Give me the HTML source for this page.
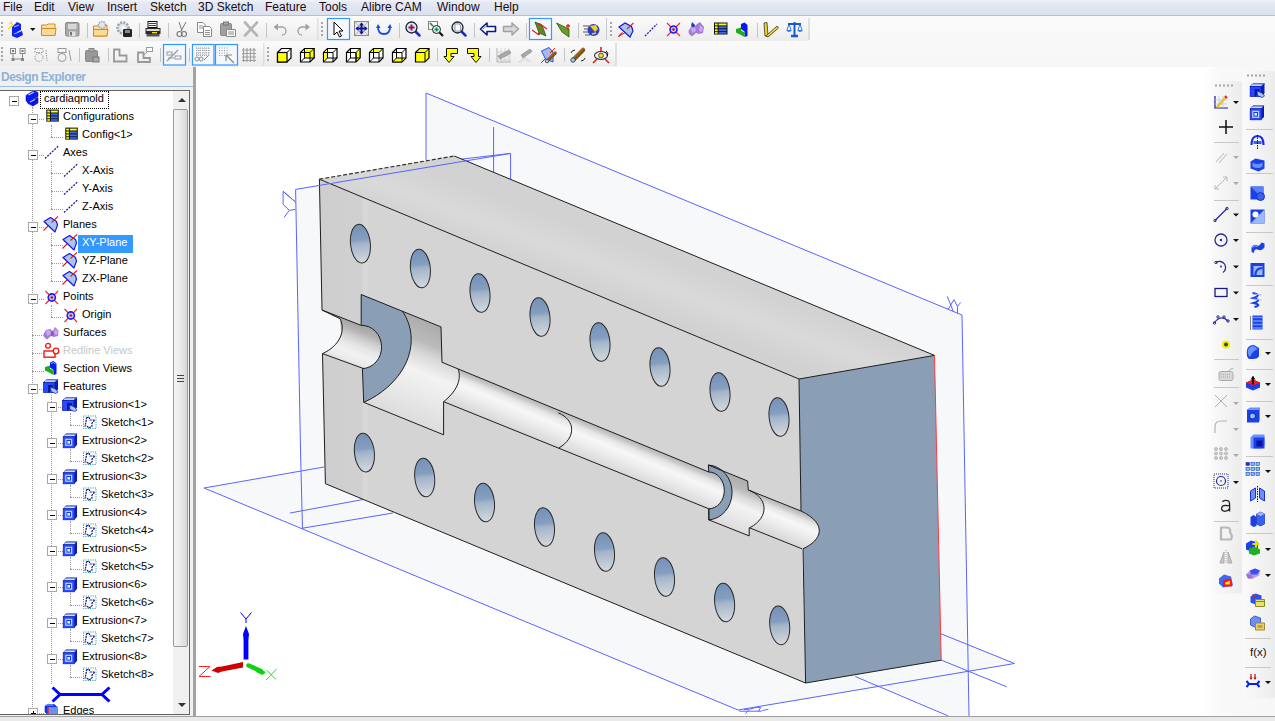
<!DOCTYPE html>
<html><head><meta charset="utf-8">
<style>
*{box-sizing:border-box}
html,body{margin:0;padding:0}
body{width:1275px;height:721px;overflow:hidden;position:relative;background:#fff;font-family:"Liberation Sans",sans-serif;color:#000}
.abs{position:absolute}
#menubar{left:0;top:0;width:1275px;height:16px;background:linear-gradient(#f1f3f9 0,#e4e8f4 3px,#dde2f0 14px);border-bottom:1px solid #b7bfd0}
.mi{position:absolute;top:0px;font-size:12px;line-height:14px;white-space:nowrap;color:#1a0a10}
#tbband{left:0;top:16px;width:1275px;height:51px;background:linear-gradient(#fafafa,#f7f7f7)}
#panel{left:0;top:67px;width:193px;height:649px;background:#f0f0f0}
#splitter{left:193px;top:67px;width:3px;height:649px;background:#a3a3a3}
#hdrtxt{left:1px;top:70px;font-size:12px;font-weight:bold;color:#8fb1d8;letter-spacing:-0.5px}
#hdrline{left:0;top:86px;width:193px;height:1px;background:#9dbbe0}
#tree{left:0;top:90px;width:190px;height:625px;background:#fff;border-top:1px solid #646464;border-right:1px solid #646464;border-bottom:1px solid #646464;overflow:hidden}
#tree .t{position:absolute;font-size:11px;line-height:13px;white-space:nowrap}
#tree .vl{position:absolute;width:1px;border-left:1px dotted #9a9a9a}
#tree .hl{position:absolute;height:1px;border-top:1px dotted #9a9a9a}
#tree .ex{position:absolute;width:10px;height:10px;border:1px solid #a8a8a8;background:#fff}
#tree .ex i{position:absolute;left:1.5px;top:3.5px;width:5px;height:1.5px;background:#000}
#tree .ex b{position:absolute;left:3.5px;top:1.5px;width:1.5px;height:5px;background:#000}
#tree .ic{position:absolute;overflow:visible}
#bottom{left:0;top:716px;width:1275px;height:5px;background:#eaeaea;border-top:1px solid #a0a0a0}
</style></head><body>
<svg width="0" height="0" style="position:absolute">
<defs>
<symbol id="i-part" viewBox="0 0 20 20"><path d="M5 6.5 L10 3.5 L14 5.5 L14 9.5 L9 12 L9 12.5 L14 10.5 L14 16 L9 19 L4 16.5 L2 13.5 L2 8.5 Z" fill="#0a18f5" stroke="#0a10b0" stroke-width="0.6"/><path d="M4.5 8 L10 5 M6 15 L11 12.5" stroke="#b0c8ff" stroke-width="1.3"/><path d="M9 19 L9 15 L14 12.5" stroke="#0008a0" stroke-width="0.8" fill="none"/></symbol>
<symbol id="i-config" viewBox="0 0 20 20"><rect x="3.3" y="4.6" width="12.5" height="12" fill="#111"/><rect x="4.3" y="5.6" width="2.6" height="1.9" fill="#ffff00"/><rect x="7.9" y="5.6" width="6.9" height="1.9" fill="#ffff00"/><rect x="4.3" y="8.5" width="2.6" height="1.9" fill="#ffff00"/><rect x="7.9" y="8.5" width="6.9" height="1.9" fill="#3b6cf7"/><rect x="4.3" y="11.4" width="2.6" height="1.9" fill="#ffff00"/><rect x="7.9" y="11.4" width="6.9" height="1.9" fill="#3b6cf7"/><rect x="4.3" y="14.2" width="2.6" height="1.6" fill="#ffff00"/><rect x="7.9" y="14.2" width="6.9" height="1.6" fill="#3b6cf7"/></symbol>
<symbol id="i-axis" viewBox="0 0 20 20"><path d="M2 17.5 L15.5 5" stroke="#1a1aa0" stroke-width="1.3" stroke-dasharray="2 1.2"/></symbol>
<symbol id="i-plane" viewBox="0 0 20 20"><path d="M0.5 17.5 L5 13" stroke="#d02020" stroke-width="1.1"/><path d="M1 8.5 L7.5 4.5 L13.5 8.5 L14.5 12 L12 19 Z" fill="#a9c5ec" stroke="#1212e0" stroke-width="1.1" stroke-linejoin="round"/><path d="M8.5 9.5 L15 3.5" stroke="#e02020" stroke-width="1.1"/></symbol>
<symbol id="i-point" viewBox="0 0 20 20"><path d="M2.5 6 L15 19 M15 6 L2.5 19" stroke="#ff2020" stroke-width="1.1"/><circle cx="8.8" cy="12.5" r="3.6" fill="#c8c8d0" stroke="#1a1aff" stroke-width="1.6"/><circle cx="8.8" cy="12.5" r="1.3" fill="#c01020"/></symbol>
<symbol id="i-surf" viewBox="0 0 20 20"><path d="M0.5 13 L3 9 L7 8 L10 10 L12 6 L15.5 9.5 L15 15 L11 16 L8 15 L4 18.5 L1 16 Z" fill="#a77ad6"/><path d="M3 10 L7 9 L8 13 L4 15 Z M12 8 L15 10 L14 14 L11 13 Z" fill="#c9a8ef"/><path d="M8 11 L10 10.5 L11 14 L8 15 Z" fill="#8a50c0"/></symbol>
<symbol id="i-redline" viewBox="0 0 20 20"><circle cx="5" cy="6.8" r="2.4" fill="none" stroke="#ff1010" stroke-width="1.3"/><rect x="1" y="12" width="11" height="6.2" fill="none" stroke="#ff1010" stroke-width="1.4"/><circle cx="13" cy="12" r="2.8" fill="#fff" stroke="#ff1010" stroke-width="1.3"/></symbol>
<symbol id="i-section" viewBox="0 0 20 20"><path d="M7 5.5 L10.5 4 L13.5 6.5 L13.5 17 L10.5 18 L10.5 13 L7 10.5 Z" fill="#0a18f5"/><path d="M8 6.5 L10.5 5.5 L12.5 7" stroke="#8ab0ff" stroke-width="1" fill="none"/><path d="M2 10 L7 8.5 L7 11.5 L10.5 13.5 L10.5 18 L6 15.5 L2 13.5 Z" fill="#18b018"/></symbol>
<symbol id="i-feat" viewBox="0 0 20 20"><path d="M0.5 7.5 L3.5 4.7 H15 L11.5 7.5 Z" fill="#8aa8ff" stroke="#0a18b0" stroke-width="0.7"/><path d="M11.5 7.5 L15 4.7 V14.5 L11.5 17.5 Z" fill="#0a1ab8"/><rect x="0.5" y="7.5" width="11" height="10" fill="#2648ff" stroke="#0a18b0" stroke-width="0.7"/><path d="M2 6.2 H12" stroke="#e0ecff" stroke-width="1"/><path d="M5 10 H10 V12.5 L7.5 12.5 L7 17.5 H5 Z" fill="#0a18a0"/><path d="M7.5 12 L12.5 14 L15 17 L12.5 18.5 L8 16.5 Z" fill="#a8c8ff" stroke="#0a18b0" stroke-width="0.7"/></symbol>
<symbol id="i-extr" viewBox="0 0 20 20"><path d="M1.2 7.8 L4 4.8 H15 L12.2 7.8 Z" fill="#8aa8ff" stroke="#0a18b0" stroke-width="0.7"/><path d="M12.2 7.8 L15 4.8 V16 L12.2 18.8 Z" fill="#0a1ab8"/><rect x="1.2" y="7.8" width="11" height="11" fill="#2a50ff" stroke="#0a18b0" stroke-width="0.7"/><rect x="3.8" y="10.4" width="5.8" height="5.8" fill="#1030e0" stroke="#b8d0ff" stroke-width="1.3"/><rect x="5.4" y="12" width="2.6" height="2.6" fill="#e8f0ff"/><path d="M2.5 6.4 H12.5" stroke="#e0ecff" stroke-width="0.9"/></symbol>
<symbol id="i-sketch" viewBox="0 0 20 20"><rect x="2.5" y="5" width="12.5" height="12.5" fill="none" stroke="#2a8a90" stroke-width="1" stroke-dasharray="1 1.3"/><path d="M5.5 7 L8 6 L9 9 L14 9 L11 12 L11 15 L8 17 L6 15 L4 15 L5 11 Z" fill="none" stroke="#101890" stroke-width="1.2" stroke-dasharray="2 0.8"/></symbol>
<symbol id="i-edges" viewBox="0 0 20 20"><path d="M1.7 7 L4.5 5 L11 5 L14.6 8 L14.6 16 L4.5 16 L1.7 13 Z" fill="#1030e8"/><rect x="4.5" y="8" width="10" height="8" fill="#6a90f0"/><path d="M5 8 V16" stroke="#ff1010" stroke-width="1.3"/><path d="M2.5 6 H10.5" stroke="#a0c0ff" stroke-width="1"/></symbol>
</defs></svg>

<div id="menubar" class="abs"></div>
<div class="mi" style="left:3px">File</div>
<div class="mi" style="left:34px">Edit</div>
<div class="mi" style="left:68px">View</div>
<div class="mi" style="left:107px">Insert</div>
<div class="mi" style="left:150px">Sketch</div>
<div class="mi" style="left:198px">3D Sketch</div>
<div class="mi" style="left:265px">Feature</div>
<div class="mi" style="left:319px">Tools</div>
<div class="mi" style="left:361px">Alibre CAM</div>
<div class="mi" style="left:437px">Window</div>
<div class="mi" style="left:494px">Help</div>
<div id="tbband" class="abs"></div>
<svg class="abs" style="left:0;top:16px" width="1275" height="51" viewBox="0 16 1275 51">
<defs>
<linearGradient id="tbg" x1="0" y1="0" x2="0" y2="1"><stop offset="0" stop-color="#fbfbfb"/><stop offset="1" stop-color="#ececec"/></linearGradient>
<linearGradient id="fold" x1="0" y1="0" x2="0" y2="1"><stop offset="0" stop-color="#fde7b8"/><stop offset="1" stop-color="#f4c877"/></linearGradient>
<linearGradient id="cyl" x1="0" y1="0" x2="1" y2="1"><stop offset="0" stop-color="#f0c060"/><stop offset="0.5" stop-color="#8a5a10"/><stop offset="1" stop-color="#3a2a08"/></linearGradient>
</defs>
<rect x="0" y="17" width="318.5" height="24" fill="url(#tbg)" rx="2"/>
<rect x="317.5" y="18" width="1" height="22" fill="#c9c9c9"/>
<rect x="318.5" y="17" width="288.5" height="24" fill="url(#tbg)" rx="2"/>
<rect x="606" y="18" width="1" height="22" fill="#c9c9c9"/>
<rect x="607" y="17" width="202.5" height="24" fill="url(#tbg)" rx="2"/>
<rect x="808.5" y="18" width="1" height="22" fill="#c9c9c9"/>
<rect x="0" y="42" width="264.5" height="24.5" fill="url(#tbg)" rx="2"/>
<rect x="263.5" y="43" width="1" height="22.5" fill="#c9c9c9"/>
<rect x="264.5" y="42" width="352.0" height="24.5" fill="url(#tbg)" rx="2"/>
<rect x="615.5" y="43" width="1" height="22.5" fill="#c9c9c9"/>
<rect x="1" y="22" width="2" height="2" fill="#a6a6a6"/>
<rect x="1" y="26" width="2" height="2" fill="#a6a6a6"/>
<rect x="1" y="30" width="2" height="2" fill="#a6a6a6"/>
<rect x="1" y="34" width="2" height="2" fill="#a6a6a6"/>
<g transform="translate(8 21)"><path d="M9 1 L13 3 L13 9 L9 11 L9 12 L14 10 L15 14 L9 17 L4 15 L4 6 Z" fill="#1020f0"/><path d="M6 6 L11 4 M6 13 L11 11" stroke="#8ab0ff" stroke-width="1.2"/><path d="M1 2 L5 4 M3 0 L4 3 M0 8 L4 5" stroke="#ffe000" stroke-width="1.2"/></g>
<path d="M30 28 H35.5 L32.75 31 Z" fill="#111"/>
<g transform="translate(41 23)"><path d="M0.5 2 H6 L7 1 H14 V12 H0.5 Z" fill="url(#fold)" stroke="#d08a20" stroke-width="1"/><path d="M0.5 5.5 H15 L14 12.5 H0.5 Z" fill="#fbd996" stroke="#d08a20" stroke-width="1"/></g>
<g transform="translate(65 22)"><rect x="0.5" y="0.5" width="13.5" height="13.5" rx="1.5" fill="#a8a8a8" stroke="#8a8a8a"/><rect x="3" y="2" width="8.5" height="5" fill="#d8d8d8"/><rect x="4" y="9.5" width="6.5" height="4.5" fill="#e0e0e0"/><rect x="5" y="10" width="2" height="3.5" fill="#777"/></g>
<rect x="87" y="23" width="1" height="15" fill="#c4c4c4"/>
<g transform="translate(93 21)"><path d="M0.5 5 H6 L7 4 H14 V15 H0.5 Z" fill="url(#fold)" stroke="#d08a20"/><path d="M0.5 8.5 H15 L14 15 H0.5 Z" fill="#fbd996" stroke="#d08a20"/><circle cx="9" cy="4" r="3.5" fill="#dfe6ee" stroke="#9aa4b0" stroke-width="1.5" stroke-dasharray="1.5 1"/></g>
<g transform="translate(116 21)"><circle cx="7" cy="7" r="5.5" fill="#dde3ea" stroke="#9aa2ac" stroke-width="2.5" stroke-dasharray="2 1.2"/><circle cx="7" cy="7" r="2" fill="#fff"/><rect x="7" y="8" width="9" height="8" rx="1" fill="#222"/><rect x="9" y="9" width="5" height="3" fill="#888"/></g>
<rect x="139" y="23" width="1" height="15" fill="#c4c4c4"/>
<g transform="translate(145 21)"><rect x="3" y="0.5" width="9" height="6" fill="#fff" stroke="#111"/><path d="M4 2.5 H11 M4 4.5 H11" stroke="#111" stroke-width="0.8"/><path d="M0.5 7 H15.5 V13 H0.5 Z" fill="#2a2a2a"/><rect x="1.5" y="8" width="13" height="2" fill="#d8d8d8"/><rect x="7" y="11" width="5" height="1.3" fill="#ffd800"/><rect x="1.5" y="13" width="13" height="2.5" fill="#555"/></g>
<rect x="168" y="23" width="1" height="15" fill="#c4c4c4"/>
<g transform="translate(176 21)"><path d="M3 1 L6 10 M10 1 L5 10" stroke="#777" stroke-width="1"/><circle cx="3.5" cy="13" r="2.5" fill="none" stroke="#777" stroke-width="1.1"/><circle cx="8" cy="13" r="2.5" fill="none" stroke="#777" stroke-width="1.1"/></g>
<g transform="translate(197 22)"><path d="M0.5 0.5 H6 L8 2.5 V10.5 H0.5 Z" fill="#fff" stroke="#888"/><path d="M6.5 4.5 H12.5 L14.5 6.5 V14.5 H6.5 Z" fill="#fff" stroke="#888"/><path d="M2 4 H6 M2 6 H6 M8 8.5 H13 M8 10.5 H13 M8 12.5 H13" stroke="#888" stroke-width="0.9"/></g>
<g transform="translate(220 21)"><rect x="0.5" y="2.5" width="11" height="12" rx="1" fill="#a0a0a0" stroke="#888"/><rect x="3.5" y="1" width="5" height="3" fill="#aaa" stroke="#777"/><path d="M6.5 8.5 H15.5 V15.5 H6.5 Z" fill="#fff" stroke="#888"/><path d="M8 11 H14 M8 13 H14" stroke="#888"/></g>
<g transform="translate(243 21)"><path d="M2 1.5 L14 14.5 M14 1.5 L2 14.5" stroke="#b4b4b4" stroke-width="2.6" stroke-linecap="round"/></g>
<rect x="266" y="23" width="1" height="15" fill="#c4c4c4"/>
<g transform="translate(273 22)"><path d="M3 5 H9 A4 4 0 0 1 9 13" fill="none" stroke="#a0a0a0" stroke-width="1.3"/><path d="M0.5 5 L5 1.5 V8.5 Z" fill="#a0a0a0"/></g>
<g transform="translate(297 22)"><path d="M10 5 H5 A4 4 0 0 0 5 13" fill="none" stroke="#a0a0a0" stroke-width="1.3"/><path d="M13 5 L8.5 1.5 V8.5 Z" fill="#a0a0a0"/></g>
<rect x="321" y="22" width="2" height="2" fill="#a6a6a6"/>
<rect x="321" y="26" width="2" height="2" fill="#a6a6a6"/>
<rect x="321" y="30" width="2" height="2" fill="#a6a6a6"/>
<rect x="321" y="34" width="2" height="2" fill="#a6a6a6"/>
<rect x="327.5" y="18.5" width="22" height="21" fill="#f4f8fc" stroke="#3399ff" stroke-width="1.2"/>
<g transform="translate(331 21)"><path d="M3 1 V14 L6 11 L8.5 16 L10.5 15 L8 10 H12 Z" fill="#fff" stroke="#000" stroke-width="1"/></g>
<g transform="translate(354 21)"><rect x="0.5" y="0.5" width="14" height="14" fill="#e8e8e8" stroke="#888"/><path d="M1 1 L14 14 M14 1 L1 14" stroke="#aaa" stroke-width="0.8"/><path d="M7.5 2.5 V12.5 M2.5 7.5 H12.5" stroke="#101890" stroke-width="2"/><path d="M7.5 1.5 L10 4.5 H5 Z M7.5 13.5 L10 10.5 H5 Z M1.5 7.5 L4.5 5 V10 Z M13.5 7.5 L10.5 5 V10 Z" fill="#101890"/></g>
<g transform="translate(376 22)"><path d="M2 5 Q2 12 8 12 Q14 12 14 5" fill="none" stroke="#1a4ae0" stroke-width="1.8"/><path d="M0 6 L2 2 L4.5 6 Z M11.5 6 L14 2 L16 6 Z" fill="#1a4ae0"/></g>
<rect x="399" y="23" width="1" height="15" fill="#c4c4c4"/>
<g transform="translate(405 21)"><path d="M10 10 L14.5 14.5" stroke="#1a2ad0" stroke-width="2.5" stroke-linecap="round"/><circle cx="6.5" cy="6.5" r="5.5" fill="#cfeefa" stroke="#1a2030" stroke-width="1.3"/><path d="M6.5 3.5 V9.5 M3.5 6.5 H9.5" stroke="#a01050" stroke-width="2"/></g>
<g transform="translate(428 21)"><rect x="0.5" y="0.5" width="9" height="8" fill="none" stroke="#111" stroke-dasharray="1 1"/><path d="M11 11 L15 15" stroke="#111" stroke-width="2.2"/><circle cx="8.5" cy="8.5" r="4" fill="#cfeefa" stroke="#222"/><path d="M8.5 6.5 V10.5 M6.5 8.5 H10.5" stroke="#109040" stroke-width="1.5"/><path d="M2 2 L5 5" stroke="#108040" stroke-width="1.5"/></g>
<g transform="translate(451 21)"><path d="M10 10 L14.5 14.5" stroke="#1a2ad0" stroke-width="2.5" stroke-linecap="round"/><circle cx="6.5" cy="6.5" r="5.5" fill="#cfeefa" stroke="#1a2030" stroke-width="1.3"/><path d="M4 3 H8 L9.5 4.5 V10 H4 Z" fill="#fff" stroke="#888" stroke-width="0.8"/></g>
<rect x="474" y="23" width="1" height="15" fill="#c4c4c4"/>
<g transform="translate(480 22)"><path d="M0.5 7 L7 1 V4.5 H15.5 V9.5 H7 V13 Z" fill="#fff" stroke="#0a1a80" stroke-width="1.6" stroke-linejoin="round"/><path d="M3 7 L7 3.5" stroke="#6a9af0" stroke-width="1"/></g>
<g transform="translate(503 22)"><path d="M15.5 7 L9 1 V4.5 H0.5 V9.5 H9 V13 Z" fill="#d8d8d8" stroke="#a0a0a0" stroke-width="1.4" stroke-linejoin="round"/></g>
<rect x="526" y="23" width="1" height="15" fill="#c4c4c4"/>
<rect x="529.5" y="18.5" width="22" height="21" fill="#f4f8fc" stroke="#3399ff" stroke-width="1.2"/>
<g transform="translate(532 21)"><path d="M3 1 L10 4 L14 15 L7 12 Z" fill="#5a8a20" stroke="#2a5a10" stroke-width="0.8"/><path d="M8 3 L15 8 M0 9 L7 14" stroke="#e02020" stroke-width="1.2"/><path d="M7 1.5 L9 4 L6 4 Z M8 14.5 L5 12 L8 11.5 Z" fill="#e02020"/></g>
<g transform="translate(556 22)"><path d="M0.5 1 L13 7 V15 L6 10 Z" fill="#6a9a28" stroke="#2a5a10" stroke-width="0.8"/><path d="M12 2 V8 M10 4 H14" stroke="#e02020" stroke-width="1.3"/></g>
<rect x="578" y="23" width="1" height="15" fill="#c4c4c4"/>
<g transform="translate(583 21)"><path d="M0 5 H6 M1 8 H6 M0 11 H6 M2 14 H7" stroke="#444" stroke-width="0.9"/><circle cx="10.5" cy="9" r="6" fill="#2a40c8"/><path d="M7 5 L13 4 L15 8 L12 11 Z" fill="#f0d020"/><path d="M9 13 L13 12" stroke="#f0d020" stroke-width="1.5"/></g>
<rect x="610" y="22" width="2" height="2" fill="#a6a6a6"/>
<rect x="610" y="26" width="2" height="2" fill="#a6a6a6"/>
<rect x="610" y="30" width="2" height="2" fill="#a6a6a6"/>
<rect x="610" y="34" width="2" height="2" fill="#a6a6a6"/>
<g transform="translate(618 22)"><path d="M0.5 0.5 L15 9" stroke="#e02020" stroke-width="1" transform="translate(0 15) scale(1 -1)"/><path d="M1 5 L7 1 L13.5 4.5 L15 9 L12 15 Z" fill="#a9c5ec" stroke="#1212e0" stroke-width="1.1"/><path d="M9 7 L15.5 1 M0.5 14.5 L4.5 10.5" stroke="#e02020" stroke-width="1.1"/></g>
<g transform="translate(644 23)"><path d="M1 13 L13 1" stroke="#1a1aa0" stroke-width="1.2" stroke-dasharray="2 1.2"/></g>
<g transform="translate(666 22)"><path d="M1 1 L14 14 M14 1 L1 14" stroke="#ff2020" stroke-width="1.1"/><circle cx="7.5" cy="7.5" r="3.5" fill="#c8c8d0" stroke="#1a1aff" stroke-width="1.6"/><circle cx="7.5" cy="7.5" r="1.3" fill="#c01020"/></g>
<g transform="translate(688 21)"><path d="M0.5 10 L3 6 L7 5 L9 3 L12 1 L16 6 L15 12 L11 13 L8 12 L4 15.5 L1 13 Z" fill="#a77ad6"/><path d="M4 1 L7 4 L6 7 L3 5 Z" fill="#1a3ac8"/><path d="M3 7 L7 6 L8 10 L4 12 Z M12 4 L15 7 L14 11 L11 10 Z" fill="#c9a8ef"/></g>
<g transform="translate(714 22)"><rect x="0" y="0.5" width="13.5" height="12" fill="#111"/><rect x="1" y="1.5" width="2.6" height="1.9" fill="#ffff00"/><rect x="4.6" y="1.5" width="7.9" height="1.9" fill="#ffff00"/><rect x="1" y="4.4" width="2.6" height="1.9" fill="#ffff00"/><rect x="4.6" y="4.4" width="7.9" height="1.9" fill="#3b6cf7"/><rect x="1" y="7.3" width="2.6" height="1.9" fill="#ffff00"/><rect x="4.6" y="7.3" width="7.9" height="1.9" fill="#3b6cf7"/><rect x="1" y="10.1" width="2.6" height="1.6" fill="#ffff00"/><rect x="4.6" y="10.1" width="7.9" height="1.6" fill="#3b6cf7"/></g>
<g transform="translate(736 22)"><path d="M5 2 L8.5 0.5 L11.5 3 L11.5 14 L8.5 15 L8.5 9.5 L5 7 Z" fill="#0a18f5"/><path d="M0 7 L5 5.5 L5 8.5 L8.5 10.5 L8.5 15 L4 12.5 L0 10.5 Z" fill="#18b018"/></g>
<rect x="757" y="23" width="1" height="15" fill="#c4c4c4"/>
<g transform="translate(763 21)"><path d="M1 2 L4 1.5 L5 15 L2 15 Z" fill="#f0d820" stroke="#333" stroke-width="0.8"/><path d="M3 15 L14 5 L15.5 7 L5 16 Z" fill="#f0d820" stroke="#333" stroke-width="0.8"/></g>
<g transform="translate(786 21)"><path d="M8.5 1 V14 M2 3 H15" stroke="#1a5ad0" stroke-width="2"/><path d="M5 15 H12" stroke="#1a5ad0" stroke-width="2.5"/><path d="M0 9 Q3 13 6 9 Z M11 9 Q14 13 17 9 Z" fill="#2a7af0"/><path d="M3 3 L1 9 M3 3 L5 9 M14 3 L12 9 M14 3 L16 9" stroke="#1a5ad0" stroke-width="0.8"/></g>
<rect x="1" y="47" width="2" height="2" fill="#a6a6a6"/>
<rect x="1" y="51" width="2" height="2" fill="#a6a6a6"/>
<rect x="1" y="55" width="2" height="2" fill="#a6a6a6"/>
<rect x="1" y="59" width="2" height="2" fill="#a6a6a6"/>
<g transform="translate(10 48)"><rect x="0.5" y="0.5" width="5" height="5" fill="none" stroke="#888"/><rect x="10" y="0.5" width="5" height="5" fill="none" stroke="#888"/><rect x="2" y="2" width="2" height="2" fill="#777"/><rect x="11.5" y="2" width="2" height="2" fill="#777"/><path d="M3 6 V11 H12.5 V6" stroke="#888" fill="none"/><rect x="1.5" y="10" width="3" height="3" fill="#888"/><rect x="11" y="10" width="3" height="3" fill="#888"/></g>
<g transform="translate(34 48)"><rect x="1" y="0.5" width="8" height="4" fill="none" stroke="#999" stroke-dasharray="1.5 1"/><circle cx="5" cy="9.5" r="4" fill="none" stroke="#999" stroke-dasharray="1.5 1"/><path d="M12 2 L13 13" stroke="#999" stroke-dasharray="1.5 1"/></g>
<g transform="translate(57 48)"><rect x="1" y="0.5" width="8" height="4" fill="none" stroke="#999"/><circle cx="5" cy="9.5" r="4" fill="none" stroke="#999"/><path d="M12 2 L14 13" stroke="#999"/></g>
<rect x="79" y="48" width="1" height="14" fill="#c4c4c4"/>
<g transform="translate(85 48)"><rect x="0.5" y="2.5" width="12" height="11" rx="1" fill="#999" stroke="#888"/><rect x="4" y="0.5" width="5" height="3" fill="#aaa" stroke="#888"/><rect x="8" y="9" width="6" height="5" fill="#aaa" stroke="#777"/></g>
<rect x="108" y="48" width="1" height="14" fill="#c4c4c4"/>
<g transform="translate(113 48)"><path d="M1 1.5 H6.5 V7.5 H13.5 V13.5 H1 Z" fill="none" stroke="#999" stroke-width="1.8"/></g>
<g transform="translate(137 47)"><path d="M1 5.5 H6.5 V11 H13 V15 H1 Z" fill="none" stroke="#999" stroke-width="1.8"/><rect x="9.5" y="0.5" width="6" height="4" fill="#fff" stroke="#999"/><path d="M6 9 L10 5" stroke="#999"/></g>
<rect x="160" y="48" width="1" height="14" fill="#c4c4c4"/>
<rect x="163.5" y="44.5" width="22" height="20.5" fill="#f4f8fc" stroke="#3399ff" stroke-width="1.2"/>
<g transform="translate(166 47)"><path d="M1 14 L12 3" stroke="#999" stroke-width="1.2"/><rect x="1" y="5" width="5" height="3" fill="none" stroke="#999"/><rect x="9" y="9" width="6" height="3" fill="none" stroke="#999"/><path d="M2 11 H8" stroke="#999"/></g>
<rect x="189" y="48" width="1" height="14" fill="#c4c4c4"/>
<rect x="192.5" y="44.5" width="21.5" height="20.5" fill="#f4f8fc" stroke="#3399ff" stroke-width="1.2"/>
<g transform="translate(195 47)"><path d="M1 1 H14 M1 3.5 H14 M1 6 H14 M1 8.5 H14 M2 1 V9 M5 1 V9 M8 1 V9 M11 1 V9 M14 1 V9" stroke="#999" stroke-width="0.9" stroke-dasharray="1 1"/><path d="M2 14 A2 2 0 1 1 2.1 14 M6 14 A2 2 0 1 1 6.1 14" stroke="#888" fill="none"/><path d="M9 13 L13 9" stroke="#888"/></g>
<rect x="215.5" y="44.5" width="22" height="20.5" fill="#f4f8fc" stroke="#3399ff" stroke-width="1.2"/>
<g transform="translate(218 47)"><path d="M1 1 H10 M1 3.5 H10 M1 6 H10 M1 8.5 H10" stroke="#999" stroke-width="1" stroke-dasharray="1 1.5"/><path d="M8 8 L16 16 M8 8 V14 M8 8 H14" stroke="#888" stroke-width="1.2" fill="none"/></g>
<g transform="translate(242 48)"><path d="M0 2 H14 M0 5.5 H14 M0 9 H14 M0 12.5 H14 M1.5 0 V14 M5 0 V14 M8.5 0 V14 M12 0 V14" stroke="#a0a0a0" stroke-width="1.2"/></g>
<rect x="267" y="47" width="2" height="2" fill="#a6a6a6"/>
<rect x="267" y="51" width="2" height="2" fill="#a6a6a6"/>
<rect x="267" y="55" width="2" height="2" fill="#a6a6a6"/>
<rect x="267" y="59" width="2" height="2" fill="#a6a6a6"/>
<g transform="translate(277 48)"><path d="M0.5 4.5 L4.5 0.5 H14 V10 L10 14 H0.5 Z" fill="#fff" stroke="#000" stroke-width="1.2"/><rect x="0.5" y="4.5" width="9.5" height="9.5" fill="#ffff00" stroke="#000" stroke-width="1.2"/><path d="M10 4.5 L14 0.5" stroke="#000"/></g>
<g transform="translate(300 48)"><path d="M0.5 4.5 L4.5 0.5 H14 V10 L10 14 H0.5 Z" fill="#fff" stroke="#000" stroke-width="1.2"/><rect x="4.5" y="0.5" width="9.5" height="9.5" fill="#ffff00" stroke="#000"/><path d="M0.5 4.5 H10 V14 M10 4.5 L14 0.5 M0.5 14 L4.5 10" stroke="#000" fill="none"/></g>
<g transform="translate(323 48)"><path d="M0.5 4.5 L4.5 0.5 H14 V10 L10 14 H0.5 Z" fill="#fff" stroke="#000" stroke-width="1.2"/><path d="M0.5 4.5 L4.5 0.5 V10 L0.5 14 Z" fill="#ffff00" stroke="#000"/><path d="M0.5 4.5 H10 V14 M10 4.5 L14 0.5 M4.5 10 H14" stroke="#000" fill="none"/></g>
<g transform="translate(346 48)"><path d="M0.5 4.5 L4.5 0.5 H14 V10 L10 14 H0.5 Z" fill="#fff" stroke="#000" stroke-width="1.2"/><path d="M10 4.5 L14 0.5 V10 L10 14 Z" fill="#ffff00" stroke="#000"/><path d="M0.5 4.5 H10 V14 M4.5 0.5 V10 H14 M4.5 10 L0.5 14" stroke="#000" fill="none"/></g>
<g transform="translate(369 48)"><path d="M0.5 4.5 L4.5 0.5 H14 V10 L10 14 H0.5 Z" fill="#fff" stroke="#000" stroke-width="1.2"/><path d="M0.5 4.5 L4.5 0.5 H14 L10 4.5 Z" fill="#ffff00" stroke="#000"/><path d="M0.5 4.5 H10 V14 M4.5 0.5 V10 H14 M4.5 10 L0.5 14" stroke="#000" fill="none"/></g>
<g transform="translate(392 48)"><path d="M0.5 4.5 L4.5 0.5 H14 V10 L10 14 H0.5 Z" fill="#fff" stroke="#000" stroke-width="1.2"/><path d="M0.5 14 L4.5 10 H14 L10 14 Z" fill="#ffff00" stroke="#000"/><path d="M0.5 4.5 H10 V14 M10 4.5 L14 0.5 M4.5 0.5 V10" stroke="#000" fill="none"/></g>
<g transform="translate(415 48)"><path d="M0.5 4.5 L4.5 0.5 H14 V10 L10 14 H0.5 Z" fill="#ffff00" stroke="#000" stroke-width="1.2"/><path d="M0.5 4.5 H10 V14 M10 4.5 L14 0.5" stroke="#000" fill="none"/></g>
<rect x="437" y="48" width="1" height="14" fill="#c4c4c4"/>
<g transform="translate(444 48)"><path d="M13.5 0.5 V5.5 H7 V8.5 H10 L5 14.5 L0 8.5 H2.5 V0.5 Z" fill="#ffff00" stroke="#111" stroke-width="1" stroke-linejoin="round"/></g>
<g transform="translate(467 48)"><path d="M0.5 0.5 V5.5 H7 V8.5 H4 L9 14.5 L14 8.5 H11.5 V0.5 Z" fill="#ffff00" stroke="#111" stroke-width="1" stroke-linejoin="round"/></g>
<rect x="489" y="48" width="1" height="14" fill="#c4c4c4"/>
<g transform="translate(496 47)"><path d="M1 1 V15 H15" stroke="#b0b0b0" stroke-width="1" fill="none"/><path d="M1 5 H15 M1 9 H15 M1 13 H15 M5 1 V15 M9 1 V15 M13 1 V15" stroke="#cfcfcf" stroke-width="0.9"/><path d="M2 9 L13 3 L15 6 L4 12 Z" fill="#a8a8a8" stroke="#888" stroke-width="0.6"/></g>
<g transform="translate(518 47)"><path d="M3 8 L12 2 L14 4.5 L5 11 Z" fill="#a8a8a8" stroke="#888" stroke-width="0.6"/><path d="M1 15 L7 10 L13 15 M3 15 L7 12 L11 15" stroke="#b8b8b8" stroke-dasharray="1 1" fill="none"/></g>
<g transform="translate(541 47)"><path d="M0.5 4 L8 0.5 L12 5 L12 15 L4.5 12 Z" fill="#a6b8f0" stroke="#2a40d0" stroke-width="0.9"/><path d="M14 1 L9 6 M5 11 L0 16" stroke="#e02020" stroke-width="1"/><path d="M6 14 L14 6" stroke="url(#cyl)" stroke-width="3.5" stroke-linecap="round"/><circle cx="6" cy="14" r="1.8" fill="#9ad0ff" stroke="#222" stroke-width="0.6"/></g>
<rect x="564" y="48" width="1" height="14" fill="#c4c4c4"/>
<g transform="translate(570 47)"><path d="M3 13 L13 3" stroke="url(#cyl)" stroke-width="4.5" stroke-linecap="round"/><circle cx="3" cy="13" r="2.2" fill="#9ad0ff" stroke="#222" stroke-width="0.7"/><path d="M1 6 Q2 3 5 3 M11 14 Q14 14 15 11" stroke="#222" fill="none"/></g>
<g transform="translate(593 47)"><ellipse cx="8" cy="8.5" rx="6.5" ry="4" fill="none" stroke="#333" stroke-width="1.1"/><circle cx="8" cy="8.5" r="2.4" fill="#e8e020" stroke="#555"/><path d="M8 0 V4 M4 12 L0 16 M12 12 L16 16" stroke="#e02020" stroke-width="1.6"/><path d="M13 4 Q16 6 14 9" stroke="#111" fill="none"/></g>
</svg>
<div id="panel" class="abs"></div>
<div id="hdrtxt" class="abs">Design Explorer</div>
<div id="hdrline" class="abs"></div>
<div id="tree" class="abs">
<div style="position:absolute;left:0;top:-91px;width:200px;height:900px"><div class="vl" style="left:32px;top:107px;height:606px"></div>
<div class="vl" style="left:51px;top:125px;height:12px"></div>
<div class="vl" style="left:51px;top:161px;height:48px"></div>
<div class="vl" style="left:51px;top:233px;height:48px"></div>
<div class="vl" style="left:51px;top:305px;height:12px"></div>
<div class="vl" style="left:51px;top:395px;height:289px"></div>
<div class="vl" style="left:70px;top:413px;height:12px"></div>
<div class="vl" style="left:70px;top:449px;height:12px"></div>
<div class="vl" style="left:70px;top:485px;height:12px"></div>
<div class="vl" style="left:70px;top:521px;height:12px"></div>
<div class="vl" style="left:70px;top:557px;height:12px"></div>
<div class="vl" style="left:70px;top:593px;height:12px"></div>
<div class="vl" style="left:70px;top:629px;height:12px"></div>
<div class="vl" style="left:70px;top:665px;height:12px"></div>
<div class="hl" style="left:32px;top:119px;width:12px"></div>
<div class="hl" style="left:51px;top:137px;width:12px"></div>
<div class="hl" style="left:32px;top:155px;width:12px"></div>
<div class="hl" style="left:51px;top:173px;width:12px"></div>
<div class="hl" style="left:51px;top:191px;width:12px"></div>
<div class="hl" style="left:51px;top:209px;width:12px"></div>
<div class="hl" style="left:32px;top:227px;width:12px"></div>
<div class="hl" style="left:51px;top:245px;width:12px"></div>
<div class="hl" style="left:51px;top:263px;width:12px"></div>
<div class="hl" style="left:51px;top:281px;width:12px"></div>
<div class="hl" style="left:32px;top:299px;width:12px"></div>
<div class="hl" style="left:51px;top:317px;width:12px"></div>
<div class="hl" style="left:32px;top:335px;width:12px"></div>
<div class="hl" style="left:32px;top:353px;width:12px"></div>
<div class="hl" style="left:32px;top:371px;width:12px"></div>
<div class="hl" style="left:32px;top:389px;width:12px"></div>
<div class="hl" style="left:51px;top:407px;width:12px"></div>
<div class="hl" style="left:70px;top:425px;width:12px"></div>
<div class="hl" style="left:51px;top:443px;width:12px"></div>
<div class="hl" style="left:70px;top:461px;width:12px"></div>
<div class="hl" style="left:51px;top:479px;width:12px"></div>
<div class="hl" style="left:70px;top:497px;width:12px"></div>
<div class="hl" style="left:51px;top:515px;width:12px"></div>
<div class="hl" style="left:70px;top:533px;width:12px"></div>
<div class="hl" style="left:51px;top:551px;width:12px"></div>
<div class="hl" style="left:70px;top:569px;width:12px"></div>
<div class="hl" style="left:51px;top:587px;width:12px"></div>
<div class="hl" style="left:70px;top:605px;width:12px"></div>
<div class="hl" style="left:51px;top:623px;width:12px"></div>
<div class="hl" style="left:70px;top:641px;width:12px"></div>
<div class="hl" style="left:51px;top:659px;width:12px"></div>
<div class="hl" style="left:70px;top:677px;width:12px"></div>
<div class="hl" style="left:32px;top:713px;width:12px"></div>
<div class="ex" style="left:9px;top:96px"><i></i></div>
<svg class="ic" style="left:24px;top:87px" width="20" height="20"><use href="#i-part"/></svg>
<div class="abs" style="left:40px;top:91px;width:69px;height:18px;border:1px dotted #000"></div>
<div class="t" style="left:44px;top:92.4px;">cardiaqmold</div>
<div class="ex" style="left:28px;top:114px"><i></i></div>
<svg class="ic" style="left:43px;top:105px" width="20" height="20"><use href="#i-config"/></svg>
<div class="t" style="left:63px;top:110.4px;">Configurations</div>
<svg class="ic" style="left:62px;top:123px" width="20" height="20"><use href="#i-config"/></svg>
<div class="t" style="left:82px;top:128.4px;">Config&lt;1&gt;</div>
<div class="ex" style="left:28px;top:150px"><i></i></div>
<svg class="ic" style="left:43px;top:141px" width="20" height="20"><use href="#i-axis"/></svg>
<div class="t" style="left:63px;top:146.4px;">Axes</div>
<svg class="ic" style="left:62px;top:159px" width="20" height="20"><use href="#i-axis"/></svg>
<div class="t" style="left:82px;top:164.4px;">X-Axis</div>
<svg class="ic" style="left:62px;top:177px" width="20" height="20"><use href="#i-axis"/></svg>
<div class="t" style="left:82px;top:182.4px;">Y-Axis</div>
<svg class="ic" style="left:62px;top:195px" width="20" height="20"><use href="#i-axis"/></svg>
<div class="t" style="left:82px;top:200.4px;">Z-Axis</div>
<div class="ex" style="left:28px;top:222px"><i></i></div>
<svg class="ic" style="left:43px;top:213px" width="20" height="20"><use href="#i-plane"/></svg>
<div class="t" style="left:63px;top:218.4px;">Planes</div>
<svg class="ic" style="left:62px;top:231px" width="20" height="20"><use href="#i-plane"/></svg>
<div class="abs" style="left:78px;top:235px;width:55px;height:18px;background:#3399ff"></div>
<div class="t" style="left:82px;top:236.4px;color:#fff;">XY-Plane</div>
<svg class="ic" style="left:62px;top:249px" width="20" height="20"><use href="#i-plane"/></svg>
<div class="t" style="left:82px;top:254.4px;">YZ-Plane</div>
<svg class="ic" style="left:62px;top:267px" width="20" height="20"><use href="#i-plane"/></svg>
<div class="t" style="left:82px;top:272.4px;">ZX-Plane</div>
<div class="ex" style="left:28px;top:294px"><i></i></div>
<svg class="ic" style="left:43px;top:285px" width="20" height="20"><use href="#i-point"/></svg>
<div class="t" style="left:63px;top:290.4px;">Points</div>
<svg class="ic" style="left:62px;top:303px" width="20" height="20"><use href="#i-point"/></svg>
<div class="t" style="left:82px;top:308.4px;">Origin</div>
<svg class="ic" style="left:43px;top:321px" width="20" height="20"><use href="#i-surf"/></svg>
<div class="t" style="left:63px;top:326.4px;">Surfaces</div>
<svg class="ic" style="left:43px;top:339px" width="20" height="20"><use href="#i-redline"/></svg>
<div class="t" style="left:63px;top:344.4px;color:#c8c8c8;">Redline Views</div>
<svg class="ic" style="left:43px;top:357px" width="20" height="20"><use href="#i-section"/></svg>
<div class="t" style="left:63px;top:362.4px;">Section Views</div>
<div class="ex" style="left:28px;top:384px"><i></i></div>
<svg class="ic" style="left:43px;top:375px" width="20" height="20"><use href="#i-feat"/></svg>
<div class="t" style="left:63px;top:380.4px;">Features</div>
<div class="ex" style="left:47px;top:402px"><i></i></div>
<svg class="ic" style="left:62px;top:393px" width="20" height="20"><use href="#i-feat"/></svg>
<div class="t" style="left:82px;top:398.4px;">Extrusion&lt;1&gt;</div>
<svg class="ic" style="left:81px;top:411px" width="20" height="20"><use href="#i-sketch"/></svg>
<div class="t" style="left:101px;top:416.4px;">Sketch&lt;1&gt;</div>
<div class="ex" style="left:47px;top:438px"><i></i></div>
<svg class="ic" style="left:62px;top:429px" width="20" height="20"><use href="#i-extr"/></svg>
<div class="t" style="left:82px;top:434.4px;">Extrusion&lt;2&gt;</div>
<svg class="ic" style="left:81px;top:447px" width="20" height="20"><use href="#i-sketch"/></svg>
<div class="t" style="left:101px;top:452.4px;">Sketch&lt;2&gt;</div>
<div class="ex" style="left:47px;top:474px"><i></i></div>
<svg class="ic" style="left:62px;top:465px" width="20" height="20"><use href="#i-extr"/></svg>
<div class="t" style="left:82px;top:470.4px;">Extrusion&lt;3&gt;</div>
<svg class="ic" style="left:81px;top:483px" width="20" height="20"><use href="#i-sketch"/></svg>
<div class="t" style="left:101px;top:488.4px;">Sketch&lt;3&gt;</div>
<div class="ex" style="left:47px;top:510px"><i></i></div>
<svg class="ic" style="left:62px;top:501px" width="20" height="20"><use href="#i-extr"/></svg>
<div class="t" style="left:82px;top:506.4px;">Extrusion&lt;4&gt;</div>
<svg class="ic" style="left:81px;top:519px" width="20" height="20"><use href="#i-sketch"/></svg>
<div class="t" style="left:101px;top:524.4px;">Sketch&lt;4&gt;</div>
<div class="ex" style="left:47px;top:546px"><i></i></div>
<svg class="ic" style="left:62px;top:537px" width="20" height="20"><use href="#i-extr"/></svg>
<div class="t" style="left:82px;top:542.4px;">Extrusion&lt;5&gt;</div>
<svg class="ic" style="left:81px;top:555px" width="20" height="20"><use href="#i-sketch"/></svg>
<div class="t" style="left:101px;top:560.4px;">Sketch&lt;5&gt;</div>
<div class="ex" style="left:47px;top:582px"><i></i></div>
<svg class="ic" style="left:62px;top:573px" width="20" height="20"><use href="#i-extr"/></svg>
<div class="t" style="left:82px;top:578.4px;">Extrusion&lt;6&gt;</div>
<svg class="ic" style="left:81px;top:591px" width="20" height="20"><use href="#i-sketch"/></svg>
<div class="t" style="left:101px;top:596.4px;">Sketch&lt;6&gt;</div>
<div class="ex" style="left:47px;top:618px"><i></i></div>
<svg class="ic" style="left:62px;top:609px" width="20" height="20"><use href="#i-extr"/></svg>
<div class="t" style="left:82px;top:614.4px;">Extrusion&lt;7&gt;</div>
<svg class="ic" style="left:81px;top:627px" width="20" height="20"><use href="#i-sketch"/></svg>
<div class="t" style="left:101px;top:632.4px;">Sketch&lt;7&gt;</div>
<div class="ex" style="left:47px;top:654px"><i></i></div>
<svg class="ic" style="left:62px;top:645px" width="20" height="20"><use href="#i-extr"/></svg>
<div class="t" style="left:82px;top:650.4px;">Extrusion&lt;8&gt;</div>
<svg class="ic" style="left:81px;top:663px" width="20" height="20"><use href="#i-sketch"/></svg>
<div class="t" style="left:101px;top:668.4px;">Sketch&lt;8&gt;</div>
<svg class="ic" style="left:51px;top:686px" width="60" height="17" viewBox="0 0 60 17"><path d="M1.5 1.5 L9 8.5 L1.5 15.5 M9 8.5 H51 M58.5 1.5 L51 8.5 L58.5 15.5" stroke="#0000ff" stroke-width="3" fill="none"/></svg>
<div class="ex" style="left:28px;top:708px"><i></i><b></b></div>
<svg class="ic" style="left:43px;top:699px" width="20" height="20"><use href="#i-edges"/></svg>
<div class="t" style="left:63px;top:704.4px;">Edges</div></div>
<div style="position:absolute;left:173px;top:0px;width:16px;height:623px;background:#f0f0f0"></div>
<div style="position:absolute;left:177.5px;top:7px;width:0;height:0;border-left:4px solid transparent;border-right:4px solid transparent;border-bottom:4px solid #333"></div>
<div style="position:absolute;left:173px;top:18px;width:15px;height:538px;border:1px solid #9a9a9a;border-radius:2px;background:linear-gradient(90deg,#f6f6f6 0,#ececec 45%,#d6d6da 100%)"></div>
<div style="position:absolute;left:177px;top:284px;width:7px;height:1px;background:#444;box-shadow:0 3px 0 #444,0 6px 0 #444"></div>
<div style="position:absolute;left:177.5px;top:612px;width:0;height:0;border-left:4px solid transparent;border-right:4px solid transparent;border-top:4px solid #333"></div>

</div>
<div id="splitter" class="abs"></div>
<svg class="abs" style="left:196px;top:67px" width="1079" height="649" viewBox="196 67 1079 649">
<defs>
<linearGradient id="gh" x1="0" y1="0" x2="0" y2="1"><stop offset="0" stop-color="#7591b7"/><stop offset="0.4" stop-color="#859ec0"/><stop offset="0.5" stop-color="#a3b4ca"/><stop offset="0.75" stop-color="#bcc7d3"/><stop offset="1" stop-color="#d6d9dd"/></linearGradient>
<linearGradient id="gtop" gradientUnits="userSpaceOnUse" x1="400" y1="160" x2="380" y2="215"><stop offset="0" stop-color="#d2d2d2"/><stop offset="0.5" stop-color="#d9d9d9"/><stop offset="1" stop-color="#d1d1d1"/></linearGradient>
<linearGradient id="gfront" gradientUnits="userSpaceOnUse" x1="319" y1="0" x2="380" y2="0"><stop offset="0" stop-color="#cecece"/><stop offset="0.69" stop-color="#d0d0d0"/><stop offset="0.75" stop-color="#d9d9d9"/><stop offset="0.82" stop-color="#d4d4d4"/><stop offset="1" stop-color="#d4d4d4"/></linearGradient>
<linearGradient id="gg1" gradientUnits="userSpaceOnUse" x1="0" y1="0" x2="-0.38" y2="0.925"><stop offset="0" stop-color="#b0b0b0"/><stop offset="1" stop-color="#eee"/></linearGradient>
</defs>
<defs><linearGradient id="gL" gradientUnits="userSpaceOnUse" x1="322.0" y1="310.0" x2="306.8" y2="347.1"><stop offset="0" stop-color="#a6a6a6"/><stop offset="0.15" stop-color="#b4b4b4"/><stop offset="0.3" stop-color="#cdcdcd"/><stop offset="0.5" stop-color="#e6e6e6"/><stop offset="0.7" stop-color="#f1f1f1"/><stop offset="0.88" stop-color="#ebebeb"/><stop offset="1" stop-color="#dedede"/></linearGradient><linearGradient id="gP" gradientUnits="userSpaceOnUse" x1="361.2" y1="294.5" x2="323.7" y2="385.9"><stop offset="0" stop-color="#acacac"/><stop offset="0.2" stop-color="#bababa"/><stop offset="0.32" stop-color="#d8d8d8"/><stop offset="0.5" stop-color="#f3f3f3"/><stop offset="0.75" stop-color="#e8e8e8"/><stop offset="1" stop-color="#dcdcdc"/></linearGradient><linearGradient id="gM" gradientUnits="userSpaceOnUse" x1="458.2" y1="369.1" x2="444.6" y2="402.1"><stop offset="0" stop-color="#b8b8b8"/><stop offset="0.08" stop-color="#c6c6c6"/><stop offset="0.2" stop-color="#e6e6e6"/><stop offset="0.38" stop-color="#f7f7f7"/><stop offset="0.6" stop-color="#ededed"/><stop offset="0.85" stop-color="#dfdfdf"/><stop offset="1" stop-color="#d6d6d6"/></linearGradient><linearGradient id="gS" gradientUnits="userSpaceOnUse" x1="708.3" y1="465.0" x2="689.1" y2="511.8"><stop offset="0" stop-color="#acacac"/><stop offset="0.2" stop-color="#bababa"/><stop offset="0.32" stop-color="#d8d8d8"/><stop offset="0.5" stop-color="#f3f3f3"/><stop offset="0.75" stop-color="#e8e8e8"/><stop offset="1" stop-color="#dcdcdc"/></linearGradient><linearGradient id="gR" gradientUnits="userSpaceOnUse" x1="748.3" y1="490.0" x2="735.3" y2="521.7"><stop offset="0" stop-color="#b8b8b8"/><stop offset="0.08" stop-color="#c6c6c6"/><stop offset="0.2" stop-color="#e6e6e6"/><stop offset="0.38" stop-color="#f7f7f7"/><stop offset="0.6" stop-color="#ededed"/><stop offset="0.85" stop-color="#dfdfdf"/><stop offset="1" stop-color="#d6d6d6"/></linearGradient></defs>
<g fill="#f7f8fa" fill-opacity="1">
<polygon points="426,93 962,315 969,723 433,501"/>
<polygon points="295.6,189.4 510.6,153.4 518,493 302.5,529"/>
<polygon points="204,488 738,710 1014.5,663.5 480.5,441.5"/>
</g>
<g stroke="#5a64ff" stroke-width="1" fill="none">
<polyline points="426,160 426,93 962,315 969,716"/>
<polyline points="300.5,450 295.6,189.4"/><polyline points="454,160 510.6,153.4 510.6,179"/>
<polyline points="493.6,127 493.6,172"/>
<polyline points="324,467 204,488 738,710 1014.5,663.5 941,633.8"/>
<polyline points="302.5,529 300.5,450"/>
<polyline points="302.5,528.2 393,513"/>
<polyline points="290,513 363.6,499.4"/>
<polyline points="941,660 1006.7,686.8"/>
<polyline points="855.3,676.5 948.4,716"/>
<polyline points="283.1,191.3 295.3,201.9 M283.1,191.3"/>
<path d="M283.1,191.3 L295.3,201.9 M283.1,191.3 V204.4 L289.4,210.3 L295.3,209.4 M289.4,210.3 L284,217.5"/>
<path d="M947.3,296.4 L953.6,312.2 M953.9,299.7 L948,309.7 M953.9,299.7 L957.5,306.4 L960.6,302.5 M957.5,306.4 V313.3" stroke-width="1"/>
<path d="M739.2,711.2 H761.8 M744,709.5 L749.7,709.2 L756.3,707.3 L760.7,707.6 L758.5,711.2 M762.3,710.6 L768.4,709.2 M748.6,710.3 L745.3,713.6" stroke-width="1"/>
</g>
<polygon points="319.4,179.2 454.3,156 934.5,355.4 799,379" fill="url(#gtop)"/>
<polygon points="319.4,179.2 799,379 801,511 748.3,490 747.6,481 708.3,465 708.8,472 442,362.3 441,326.9 361.2,294.5 361.2,325.4 322,310" fill="url(#gfront)"/>
<polygon points="322.5,353.6 363.7,368.6 363.7,402.3 443.6,434.8 443.6,401.7 559.1,447.8 708.8,508.8 708.8,519.9 749.2,535.9 749.2,527.7 802,548.8 805.6,683 325.4,483.7" fill="url(#gfront)"/>
<path d="M799,379 L934.5,355.4 L941.2,660.2 L805.6,683 L803,548.8 C822,540 828,524 801,511 Z" fill="#8a9eb5"/>
<path d="M361.2,294.5 L441,326.9 L442,362.3 L458.2,369.1 C462,380 456,392 443.6,401.7 L443.6,434.8 L363.7,402.3 Z" fill="url(#gP)"/>
<path d="M322,310 L361.2,325.4 A19.8,21.6 0 0 1 362.4,368.6 L322.5,353.6 C336,346 342,338 341,330 C340.5,325 340,320 340,318.7 L322,310 Z" fill="url(#gL)"/>
<path d="M708.3,465 L747.6,481 L748.3,490 C768,497 770,517 749.9,527.7 L749.2,535.9 L708.8,519.9 Z" fill="url(#gS)"/>
<path d="M458.2,369.1 L708.8,472 A15.5,18.4 0 0 1 708.8,508.8 L443.6,401.7 C456,392 462,380 458.2,369.1 Z" fill="url(#gM)"/>
<path d="M748.3,490 L801,511 C828,524 822,540 803,548.8 L749.9,527.7 C770,517 768,497 748.3,490 Z" fill="url(#gR)"/>
<path d="M361.2,294.5 L402.4,311.2 C412,325 415,345 405,365 C397,381 381,395 363.7,402.3 L362.4,368.6 A19.8,21.6 0 0 0 361.2,325.4 Z" fill="#8a9eb5"/>
<path d="M708.3,465 A25,27.5 0 0 1 708.8,519.9 L708.8,508.8 A15.5,18.4 0 0 0 708.8,472 Z" fill="#8a9eb5"/>
<ellipse cx="360.4" cy="243.7" rx="9.9" ry="19.4" transform="rotate(-6 360.4 243.7)" fill="url(#gh)" stroke="#2a2a2a" stroke-width="1"/>
<ellipse cx="420.4" cy="268.5" rx="9.9" ry="19.4" transform="rotate(-6 420.4 268.5)" fill="url(#gh)" stroke="#2a2a2a" stroke-width="1"/>
<ellipse cx="480.0" cy="293.0" rx="9.9" ry="19.4" transform="rotate(-6 480.0 293.0)" fill="url(#gh)" stroke="#2a2a2a" stroke-width="1"/>
<ellipse cx="540.0" cy="317.0" rx="9.9" ry="19.4" transform="rotate(-6 540.0 317.0)" fill="url(#gh)" stroke="#2a2a2a" stroke-width="1"/>
<ellipse cx="600.0" cy="342.0" rx="9.9" ry="19.4" transform="rotate(-6 600.0 342.0)" fill="url(#gh)" stroke="#2a2a2a" stroke-width="1"/>
<ellipse cx="660.0" cy="367.0" rx="9.9" ry="19.4" transform="rotate(-6 660.0 367.0)" fill="url(#gh)" stroke="#2a2a2a" stroke-width="1"/>
<ellipse cx="720.0" cy="392.0" rx="9.9" ry="19.4" transform="rotate(-6 720.0 392.0)" fill="url(#gh)" stroke="#2a2a2a" stroke-width="1"/>
<ellipse cx="779.0" cy="417.0" rx="9.9" ry="19.4" transform="rotate(-6 779.0 417.0)" fill="url(#gh)" stroke="#2a2a2a" stroke-width="1"/>
<ellipse cx="364.4" cy="452.6" rx="9.9" ry="19.4" transform="rotate(-6 364.4 452.6)" fill="url(#gh)" stroke="#2a2a2a" stroke-width="1"/>
<ellipse cx="424.7" cy="477.5" rx="9.9" ry="19.4" transform="rotate(-6 424.7 477.5)" fill="url(#gh)" stroke="#2a2a2a" stroke-width="1"/>
<ellipse cx="484.5" cy="502.5" rx="9.9" ry="19.4" transform="rotate(-6 484.5 502.5)" fill="url(#gh)" stroke="#2a2a2a" stroke-width="1"/>
<ellipse cx="544.5" cy="527.0" rx="9.9" ry="19.4" transform="rotate(-6 544.5 527.0)" fill="url(#gh)" stroke="#2a2a2a" stroke-width="1"/>
<ellipse cx="604.5" cy="552.0" rx="9.9" ry="19.4" transform="rotate(-6 604.5 552.0)" fill="url(#gh)" stroke="#2a2a2a" stroke-width="1"/>
<ellipse cx="664.5" cy="577.0" rx="9.9" ry="19.4" transform="rotate(-6 664.5 577.0)" fill="url(#gh)" stroke="#2a2a2a" stroke-width="1"/>
<ellipse cx="724.6" cy="602.5" rx="9.9" ry="19.4" transform="rotate(-6 724.6 602.5)" fill="url(#gh)" stroke="#2a2a2a" stroke-width="1"/>
<ellipse cx="779.7" cy="625.4" rx="9.9" ry="19.4" transform="rotate(-6 779.7 625.4)" fill="url(#gh)" stroke="#2a2a2a" stroke-width="1"/>
<g stroke="#1e1e1e" stroke-width="1" fill="none">
<path d="M319.4,179.2 L454.3,156" stroke-dasharray="4 2" stroke="#333" stroke-width="1.2"/>
<path d="M454.3,156 L934.5,355.4 M319.4,179.2 L799,379 L934.5,355.4"/>
<path d="M319.4,179.2 L322,310 L361.2,325.4 M322.5,353.6 L325.4,483.7 L805.6,683 L941.2,660.2"/>
<path d="M799,379 L801,511 M803,548.8 L805.6,683"/>
<path d="M801,511 C828,524 822,540 803,548.8"/>
<path d="M322,310 L340,318.7 C346,330 340,346 322.5,353.6 L363.7,368.6"/>
<path d="M361.2,294.5 L441,326.9 L442,362.3 L708.8,472 M708.3,465 L747.6,481 L748.3,490 L801,511"/>
<path d="M361.2,294.5 L361.2,325.4 M362.4,368.6 L363.7,402.3 L443.6,434.8 L443.6,401.7 L708.8,508.8 L708.8,519.9 M708.3,465 L708.8,472 M708.8,508.8 L708.8,519.9 L749.2,535.9 L749.2,527.7 L802,548.8"/>
<path d="M361.2,325.4 A19.8,21.6 0 0 1 362.4,368.6"/>
<path d="M402.4,311.2 C412,325 415,345 405,365 C397,381 381,395 363.7,402.3"/>
<path d="M458.2,369.1 C462,380 456,392 443.6,401.7"/>
<path d="M558.2,412.8 C576,420 576,438 559.1,447.8"/>
<path d="M708.3,465 A25,27.5 0 0 1 708.8,519.9"/>
<path d="M708.8,472 A15.5,18.4 0 0 1 708.8,508.8"/>
<path d="M748.3,490 C768,497 770,517 749.9,527.7"/>
</g>
<path d="M295.6,189.4 L510.6,153.4" stroke="#5a64ff" stroke-width="1" fill="none"/>
<path d="M934.5,355.4 L941.2,660.2" stroke="#ff3b3b" stroke-width="1" fill="none"/>
<g>
<path d="M243.6,659.5 V640 L243,634 L246,626 L249,634 L248.4,640 V659.5 Z" fill="#0000ff"/>
<path d="M240.5,612.5 L246,619 L251.5,612.5 M246,619 V623" stroke="#0000ff" stroke-width="1" fill="none"/>
<path d="M243,662 L243,667.5 L222,671.5 L218,673 L211.5,670.5 L217,667 L222,666.5 Z" fill="#d00000"/>
<path d="M199,666.5 H210 L199,676.5 H210.5" stroke="#ff2020" stroke-width="1" fill="none"/>
<path d="M248.5,665.5 L261,671" stroke="#10d010" stroke-width="4.5" stroke-linecap="round"/>
<path d="M258,668.5 L266,672 L262.5,675 L256,672 Z" fill="#10d010"/>
<path d="M266,680 L276.5,669 M266.5,670 L276,679.5" stroke="#20e020" stroke-width="1"/>
</g>
</svg>
<svg class="abs" style="left:1196px;top:67px" width="79" height="649" viewBox="1196 67 79 649">
<defs><linearGradient id="rtg" x1="0" y1="0" x2="1" y2="0"><stop offset="0" stop-color="#fafafa"/><stop offset="1" stop-color="#ececec"/></linearGradient></defs>
<defs><linearGradient id="dockg" x1="0" y1="0" x2="1" y2="0"><stop offset="0" stop-color="#fff"/><stop offset="0.25" stop-color="#f9f9f9"/><stop offset="1" stop-color="#f7f7f7"/></linearGradient></defs><rect x="1203" y="67" width="72" height="649" fill="url(#dockg)"/>
<rect x="1211.5" y="81" width="30.5" height="512.5" rx="2" fill="url(#rtg)"/>
<rect x="1243.5" y="71" width="31.5" height="627.5" rx="2" fill="url(#rtg)"/>
<rect x="1215" y="84.5" width="2" height="2" fill="#a6a6a6"/>
<rect x="1219" y="84.5" width="2" height="2" fill="#a6a6a6"/>
<rect x="1223" y="84.5" width="2" height="2" fill="#a6a6a6"/>
<rect x="1227" y="84.5" width="2" height="2" fill="#a6a6a6"/>
<rect x="1231" y="84.5" width="2" height="2" fill="#a6a6a6"/>
<rect x="1247" y="74.5" width="2" height="2" fill="#a6a6a6"/>
<rect x="1251" y="74.5" width="2" height="2" fill="#a6a6a6"/>
<rect x="1255" y="74.5" width="2" height="2" fill="#a6a6a6"/>
<rect x="1259" y="74.5" width="2" height="2" fill="#a6a6a6"/>
<rect x="1263" y="74.5" width="2" height="2" fill="#a6a6a6"/>
<g transform="translate(1213 94)"><path d="M2 2 V14 H15" stroke="#1a1a90" stroke-width="1.2" fill="none"/><path d="M2 6 H14 M2 10 H14 M6 2 V14 M10 2 V14" stroke="#b8c8f0" stroke-width="0.8"/><path d="M4 13 L13 3" stroke="#f0c020" stroke-width="2.5"/><path d="M12 2 L14 4" stroke="#e02020" stroke-width="2"/></g>
<path d="M1233 101 h6 l-3 3 z" fill="#111"/>
<g transform="translate(1218 119)"><path d="M8 1 V15 M1 8 H15" stroke="#111" stroke-width="1.5"/></g>
<rect x="1214" y="142" width="25" height="1" fill="#c8c8c8"/>
<g transform="translate(1213 149)"><path d="M3 13 L11 4 M6 14 L14 5" stroke="#c0c0c0" stroke-width="1.1"/></g>
<path d="M1233 156 h6 l-3 3 z" fill="#aaa"/>
<g transform="translate(1213 175)"><path d="M2 14 L14 2 M2 14 V10 M2 14 H6 M14 2 V6 M14 2 H10" stroke="#b8b8b8" stroke-width="1" fill="none"/></g>
<path d="M1233 182 h6 l-3 3 z" fill="#aaa"/>
<rect x="1214" y="200" width="25" height="1" fill="#c8c8c8"/>
<g transform="translate(1213 206.5)"><path d="M2 14 L14 2" stroke="#2a2a90" stroke-width="1.3"/><circle cx="2" cy="14" r="1.2" fill="none" stroke="#2a2a90"/><circle cx="14" cy="2" r="1.2" fill="none" stroke="#2a2a90"/></g>
<path d="M1233 213.5 h6 l-3 3 z" fill="#111"/>
<g transform="translate(1213 232)"><circle cx="8" cy="8" r="6" fill="none" stroke="#2a2a90" stroke-width="1.3"/><circle cx="8" cy="8" r="1.2" fill="#2a2a90"/></g>
<path d="M1233 239 h6 l-3 3 z" fill="#111"/>
<g transform="translate(1213 258.5)"><path d="M3 4 A6 6 0 1 1 10 14" fill="none" stroke="#2a2a90" stroke-width="1.3"/><circle cx="8" cy="8" r="1" fill="#2a2a90"/><circle cx="3" cy="4" r="1.2" fill="none" stroke="#2a2a90"/></g>
<path d="M1233 265.5 h6 l-3 3 z" fill="#111"/>
<g transform="translate(1213 284.5)"><rect x="2" y="4" width="12" height="8" fill="none" stroke="#1a1a90" stroke-width="1.3"/></g>
<path d="M1233 291.5 h6 l-3 3 z" fill="#111"/>
<g transform="translate(1213 311)"><path d="M1 12 Q8 3 15 10" fill="none" stroke="#2a2a90" stroke-width="1.2"/><circle cx="1.5" cy="12" r="1.2" fill="none" stroke="#2a2a90"/><circle cx="5" cy="6" r="1.2" fill="none" stroke="#2a2a90"/><circle cx="11" cy="6" r="1.2" fill="none" stroke="#2a2a90"/><circle cx="15" cy="10" r="1.2" fill="none" stroke="#2a2a90"/></g>
<path d="M1233 318 h6 l-3 3 z" fill="#111"/>
<g transform="translate(1218 336.5)"><circle cx="8" cy="8" r="3" fill="#444" stroke="#f0f000" stroke-width="2"/></g>
<rect x="1214" y="359" width="25" height="1" fill="#c8c8c8"/>
<g transform="translate(1218 366.5)"><rect x="1" y="5" width="14" height="9" rx="2" fill="#d8d8d8" stroke="#aaa"/><path d="M3 8 H13 M3 10.5 H13" stroke="#aaa" stroke-dasharray="1 1"/><path d="M10 5 Q12 2 15 2" stroke="#aaa" fill="none"/></g>
<rect x="1214" y="387" width="25" height="1" fill="#c8c8c8"/>
<g transform="translate(1213 393)"><path d="M2 2 L14 14 M14 2 L2 14" stroke="#b0b0b0" stroke-width="1"/></g>
<path d="M1233 402 h6 l-3 3 z" fill="#aaa"/>
<g transform="translate(1213 419)"><path d="M2 14 V8 Q2 2 8 2 H14" stroke="#b0b0b0" fill="none" stroke-width="1.1"/></g>
<path d="M1233 428 h6 l-3 3 z" fill="#aaa"/>
<g transform="translate(1213 445)"><g fill="#c8c8c8" stroke="#a8a8a8" stroke-width="0.6"><circle cx="3" cy="4" r="1.6"/><circle cx="8" cy="4" r="1.6"/><circle cx="13" cy="4" r="1.6"/><circle cx="3" cy="8.5" r="1.6"/><circle cx="8" cy="8.5" r="1.6"/><circle cx="13" cy="8.5" r="1.6"/><circle cx="3" cy="13" r="1.6"/><circle cx="8" cy="13" r="1.6"/><circle cx="13" cy="13" r="1.6"/></g></g>
<path d="M1233 454 h6 l-3 3 z" fill="#aaa"/>
<g transform="translate(1213 473)"><rect x="1" y="1" width="14" height="14" fill="none" stroke="#2a2a90" stroke-dasharray="1 1"/><circle cx="8" cy="8" r="4.5" fill="none" stroke="#2a2a90" stroke-width="1.2"/><circle cx="8" cy="8" r="0.8" fill="#2a2a90"/></g>
<path d="M1233 481 h6 l-3 3 z" fill="#111"/>
<path d="M1222.3,501.6 Q1225.5,499.6 1228.2,500.8 Q1229.6,501.6 1229.6,504 V511.6 M1229.6,505.8 Q1229,505.3 1225.6,505.3 Q1221.6,505.5 1221.6,508.6 Q1221.7,511.2 1224.8,511.3 Q1228.5,511.2 1229.6,508.6" stroke="#222" stroke-width="1.3" fill="none"/>
<rect x="1214" y="521" width="25" height="1" fill="#c8c8c8"/>
<g transform="translate(1218 525.5)"><path d="M3 2 H9 Q13 2 12 7 Q15 10 13 14 H3 Z" fill="none" stroke="#b8b8b8" stroke-width="2.2"/></g>
<g transform="translate(1218 549)"><path d="M6 3 L2 14 H6 Z M10 3 L14 14 H10 Z" fill="#c8c8c8" stroke="#aaa"/><path d="M8 1 V15" stroke="#aaa" stroke-dasharray="1 1"/></g>
<g transform="translate(1218 572.5)"><path d="M1 6 L6 2 L13 4 L15 13 L5 15 L1 11 Z" fill="#3a6af0"/><path d="M5 8 L13 6 L14 14 L5 14 Z" fill="#ff1010"/><path d="M7 10 L12 8 L12 12 L7 12 Z" fill="#e8e020"/></g>
<use href="#i-feat" x="1249.5" y="79" width="20" height="20"/>
<use href="#i-extr" x="1249" y="101" width="20" height="20"/>
<rect x="1246" y="129" width="27" height="1" fill="#c8c8c8"/>
<g transform="translate(1249.5 133)"><path d="M2 12 Q2 3 8 3 Q14 3 14 12" fill="none" stroke="#1a30e0" stroke-width="2.2"/><path d="M4 8 H12 V11 H4 Z" fill="#3a60f0"/><path d="M8 2 V16" stroke="#111" stroke-dasharray="1.5 1"/></g>
<g transform="translate(1249.5 156.5)"><path d="M1 5 L6 2 L15 4 L15 12 L9 15 L1 12 Z" fill="#1a40e8"/><path d="M3 6 Q8 9 13 6 L13 10 Q8 13 3 10 Z" fill="#6a90ff"/></g>
<rect x="1246" y="173" width="27" height="1" fill="#c8c8c8"/>
<g transform="translate(1249.5 185.5)"><rect x="1" y="1" width="13" height="13" fill="#1a40e8"/><path d="M1 1 L14 14 V1 Z" fill="#5a80ff"/><circle cx="11" cy="11" r="4" fill="#3a60f0" stroke="#1a30c0"/></g>
<g transform="translate(1249.5 208.5)"><rect x="1" y="1" width="14" height="14" fill="#1a40e8"/><path d="M15 1 V15 H1 Z" fill="#9cb8ff"/><circle cx="6" cy="6" r="3" fill="#fff"/></g>
<rect x="1246" y="232" width="27" height="1" fill="#c8c8c8"/>
<g transform="translate(1249.5 239.5)"><path d="M2 12 L2 8 Q4 4 8 6 Q10 7 12 3 L15 4 L15 8 Q12 12 8 10 Q5 9 4 14 Z" fill="#1a40e8"/><path d="M3 8 Q5 5 8 7" stroke="#9cb8ff" fill="none"/></g>
<g transform="translate(1249.5 262)"><rect x="1" y="1" width="14" height="14" fill="#1a40e8"/><path d="M4 4 H13 V13 H4 Z" fill="#9cb8ff"/><path d="M6 13 Q6 6 13 6" stroke="#1a40e8" stroke-width="2" fill="none"/></g>
<rect x="1246" y="285" width="27" height="1" fill="#c8c8c8"/>
<g transform="translate(1249.5 291)"><path d="M3 2 Q13 4 4 7 Q13 9 4 12 Q13 14 5 16" fill="none" stroke="#1a40e8" stroke-width="2.2"/><path d="M4 3 L12 4 M4 8 L12 9" stroke="#9cb8ff"/></g>
<g transform="translate(1249.5 314.5)"><path d="M3 1 H13 V15 H3 Z" fill="#1a40e8"/><path d="M3 3 H13 M3 6.5 H13 M3 10 H13 M3 13.5 H13" stroke="#6a90ff" stroke-width="1.4"/><path d="M1 2 V15" stroke="#111" stroke-dasharray="1 1"/></g>
<rect x="1246" y="339" width="27" height="1" fill="#c8c8c8"/>
<g transform="translate(1245 344)"><path d="M2 6 Q3 1 9 1 L14 4 V12 Q13 15 8 15 H4 Q1 13 2 6 Z" fill="#1a40e8"/><path d="M3 6 Q4 2 9 2 L13 5 Q8 6 5 13 Q2 11 3 6 Z" fill="#6a90ff"/></g>
<path d="M1265 352 h6 l-3 3 z" fill="#111"/>
<rect x="1246" y="369" width="27" height="1" fill="#c8c8c8"/>
<g transform="translate(1245 375.5)"><path d="M1 7 L8 4 L15 7 V12 L8 15 L1 12 Z" fill="#1a40e8"/><path d="M1 7 L8 4 L15 7 L8 10 Z" fill="#ff1818"/><path d="M8 9 V1" stroke="#111" stroke-width="1.8"/><path d="M5.5 4 L8 0.5 L10.5 4 Z" fill="#111"/></g>
<path d="M1265 383 h6 l-3 3 z" fill="#111"/>
<rect x="1246" y="401" width="27" height="1" fill="#c8c8c8"/>
<g transform="translate(1245 407.5)"><rect x="2" y="2" width="12" height="13" fill="#1a40e8"/><path d="M2 2 L5 0 H15 V12 L14 15 V2 Z" fill="#6a90ff"/><circle cx="7.5" cy="8.5" r="3" fill="#9cc0ff" stroke="#0a20c0"/></g>
<path d="M1265 415 h6 l-3 3 z" fill="#111"/>
<g transform="translate(1249.5 433.5)"><path d="M1 4 L4 1 H15 V12 L12 15 H1 Z" fill="#6a90ff"/><rect x="4" y="4" width="11" height="11" fill="#1a40e8"/><rect x="7" y="7" width="6" height="6" fill="#0a10a0"/></g>
<rect x="1246" y="456" width="27" height="1" fill="#c8c8c8"/>
<g transform="translate(1245 461.5)"><g stroke="#1a40c0" stroke-width="0.6"><rect x="1" y="1" width="3.5" height="3" fill="#1a30c0"/><rect x="6" y="1" width="3.5" height="3" fill="#8ac0f0"/><rect x="11" y="1" width="3.5" height="3" fill="#8ac0f0"/><rect x="1" y="6" width="3.5" height="3" fill="#8ac0f0"/><rect x="6" y="6" width="3.5" height="3" fill="#8ac0f0"/><rect x="11" y="6" width="3.5" height="3" fill="#8ac0f0"/><rect x="1" y="11" width="3.5" height="3" fill="#8ac0f0"/><rect x="6" y="11" width="3.5" height="3" fill="#8ac0f0"/><rect x="11" y="11" width="3.5" height="3" fill="#8ac0f0"/></g></g>
<path d="M1265 470 h6 l-3 3 z" fill="#111"/>
<g transform="translate(1249.5 486)"><path d="M6 2 L1 5 V15 L6 12 Z M10 2 L15 5 V15 L10 12 Z" fill="#6a90ff" stroke="#1a30d0" stroke-width="1"/><path d="M8 0 V16" stroke="#111" stroke-dasharray="1.5 1"/></g>
<g transform="translate(1249.5 511)"><path d="M1 6 L4 4 L7 6 V15 L4 16 L1 14 Z" fill="#1a40e8"/><path d="M7 3 L11 1 L15 3 V13 L11 15 L7 13 Z" fill="#3a60f0" stroke="#0a20b0" stroke-width="0.6"/><path d="M7 3 L11 1 L15 3 L11 5 Z" fill="#9cb8ff"/></g>
<rect x="1246" y="533" width="27" height="1" fill="#c8c8c8"/>
<g transform="translate(1245 539.5)"><path d="M1 4 L6 1 L13 3 V10 L6 12 L1 10 Z" fill="#1a40e8"/><path d="M4 9 L10 7 L15 10 V14 L9 16 L4 14 Z" fill="#20b020"/><path d="M11 1 V8 M7.5 4.5 H14.5" stroke="#f0e000" stroke-width="2"/></g>
<path d="M1265 548 h6 l-3 3 z" fill="#111"/>
<g transform="translate(1245 565.5)"><path d="M1 9 L5 5 L10 3 L15 5 L14 10 L8 13 L3 13 Z" fill="#b898e8"/><path d="M5 5 L10 3 L15 5 L12 9 L6 9 Z" fill="#3a50f0"/><path d="M1 9 L6 9 L8 13 L3 13 Z" fill="#9a70d8"/></g>
<path d="M1265 574 h6 l-3 3 z" fill="#111"/>
<g transform="translate(1249.5 591.5)"><path d="M1 5 L6 2 L12 4 V11 L6 13 L1 11 Z" fill="#2a50f0"/><path d="M3 3 L6 6" stroke="#e02020" stroke-width="2"/><path d="M6 8 H15 V15 H6 Z" fill="#e8e070" stroke="#8a8a20"/><path d="M6 10 H15" stroke="#8a8a20"/></g>
<g transform="translate(1249.5 615)"><path d="M1 4 L5 1 L11 3 V10 L5 12 L1 10 Z" fill="#6a90f0" stroke="#1a30c0" stroke-width="0.7"/><path d="M6 8 H15 V15 H6 Z" fill="#e8d070" stroke="#9a8a30"/><rect x="8" y="10" width="5" height="3" fill="#c0a050"/></g>
<rect x="1245" y="638" width="26" height="1" fill="#c8c8c8"/>
<text x="1250" y="656" font-family="Liberation Sans" font-size="11.5" fill="#111">f(x)</text>
<rect x="1245" y="667" width="26" height="1" fill="#c8c8c8"/>
<g transform="translate(1245 673)"><path d="M1.5 8 L4 11 L1.5 14 M4 11 H12 M14.5 8 L12 11 L14.5 14" stroke="#0a20f0" stroke-width="2" fill="none"/><path d="M6 1 V5 M10 1 V5" stroke="#b01010" stroke-width="1.2"/><path d="M4.5 4.5 L6 7 L7.5 4.5 Z M8.5 4.5 L10 7 L11.5 4.5 Z" fill="#b01010"/></g>
<path d="M1265 681 h6 l-3 3 z" fill="#111"/>
</svg>
<div id="bottom" class="abs"></div>
</body></html>
